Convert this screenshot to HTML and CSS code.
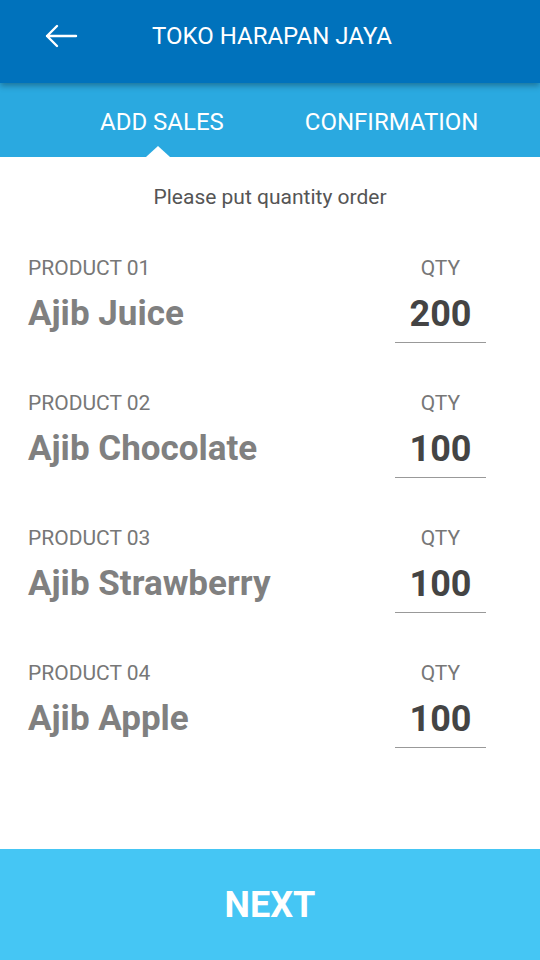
FILE: index.html
```html
<!DOCTYPE html>
<html>
<head>
    <title>Toko Harapan Jaya - Add Sales</title>
    <link rel="stylesheet" href="styles.css">
</head>
<body>
    <!-- Top bar -->
    <header class="topbar">
        <button class="back-btn" type="button" aria-label="Back">
            <svg width="34" height="24" viewBox="0 0 34 24">
                <path d="M32 12H3M13 2L3 12l10 10" fill="none" stroke="#fff" stroke-width="2.4" stroke-linecap="round" stroke-linejoin="round"/>
            </svg>
        </button>
        <h1 class="title">TOKO HARAPAN JAYA</h1>
    </header>

    <!-- Steps -->
    <nav class="tabs">
        <div class="tab active">ADD SALES</div>
        <div class="tab">CONFIRMATION</div>
    </nav>

    <main class="content">
        <p class="hint">Please put quantity order</p>

        <div class="product-list">
            <div class="product-row">
                <div class="product-info">
                    <div class="label">PRODUCT 01</div>
                    <div class="product-name">Ajib Juice</div>
                </div>
                <div class="qty">
                    <div class="label">QTY</div>
                    <div class="qty-value">200</div>
                </div>
            </div>
            <div class="product-row">
                <div class="product-info">
                    <div class="label">PRODUCT 02</div>
                    <div class="product-name">Ajib Chocolate</div>
                </div>
                <div class="qty">
                    <div class="label">QTY</div>
                    <div class="qty-value">100</div>
                </div>
            </div>
            <div class="product-row">
                <div class="product-info">
                    <div class="label">PRODUCT 03</div>
                    <div class="product-name">Ajib Strawberry</div>
                </div>
                <div class="qty">
                    <div class="label">QTY</div>
                    <div class="qty-value">100</div>
                </div>
            </div>
            <div class="product-row">
                <div class="product-info">
                    <div class="label">PRODUCT 04</div>
                    <div class="product-name">Ajib Apple</div>
                </div>
                <div class="qty">
                    <div class="label">QTY</div>
                    <div class="qty-value">100</div>
                </div>
            </div>
        </div>
    </main>

    <button class="next-btn" type="button">NEXT</button>
</body>
</html>
```

FILE: styles.css
```css
* {
    box-sizing: border-box;
}

body {
    font-family: Roboto, "Liberation Sans", sans-serif;
    background-color: #fff;
    margin: 0;
    padding: 0;
    width: 540px;
    height: 960px;
    display: flex;
    flex-direction: column;
    overflow: hidden;
}

.topbar {
    height: 83px;
    background-color: #0072bc;
    display: flex;
    align-items: flex-start;
    padding: 24px 0 0 43px;
    position: relative;
    z-index: 2;
    box-shadow: 0 3px 6px rgba(0, 0, 0, 0.3);
}

.back-btn {
    background: none;
    border: none;
    padding: 0;
    width: 36px;
    height: 24px;
    cursor: pointer;
}

.title {
    margin: 0 0 0 73px;
    color: #fff;
    font-size: 24px;
    font-weight: 400;
    line-height: 24px;
}

.tabs {
    height: 74px;
    background-color: #2aa9e0;
    display: flex;
    padding: 26px 0 0 100px;
}

.tab {
    color: #fff;
    font-size: 24px;
    line-height: 26px;
    position: relative;
}

.tab + .tab {
    margin-left: 81px;
}

.tab.active::after {
    content: "";
    position: absolute;
    left: 46px;
    top: 37px;
    border-left: 12px solid transparent;
    border-right: 12px solid transparent;
    border-bottom: 11px solid #fff;
}

.content {
    flex: 1;
}

.hint {
    text-align: center;
    color: #555;
    font-size: 21px;
    margin: 28px 0 0;
    line-height: 24px;
}

.product-list {
    display: flex;
    flex-direction: column;
    gap: 48px;
    padding: 0 54px 0 28px;
    margin-top: 47px;
}

.product-row {
    display: flex;
    justify-content: space-between;
    align-items: flex-start;
}

.label {
    color: #777;
    font-size: 21px;
    line-height: 24px;
}

.product-name {
    color: #808080;
    font-size: 35px;
    font-weight: 700;
    line-height: 40px;
    margin-top: 14px;
}

.qty {
    width: 91px;
    text-align: center;
}

.qty-value {
    color: #444;
    font-size: 36px;
    font-weight: 700;
    line-height: 40px;
    margin-top: 14px;
    padding-bottom: 8px;
    border-bottom: 1px solid #999;
}

.next-btn {
    height: 111px;
    width: 100%;
    background-color: #45c6f4;
    color: #fff;
    border: none;
    font-family: Roboto, "Liberation Sans", sans-serif;
    font-size: 36px;
    font-weight: 700;
    cursor: pointer;
}
```
